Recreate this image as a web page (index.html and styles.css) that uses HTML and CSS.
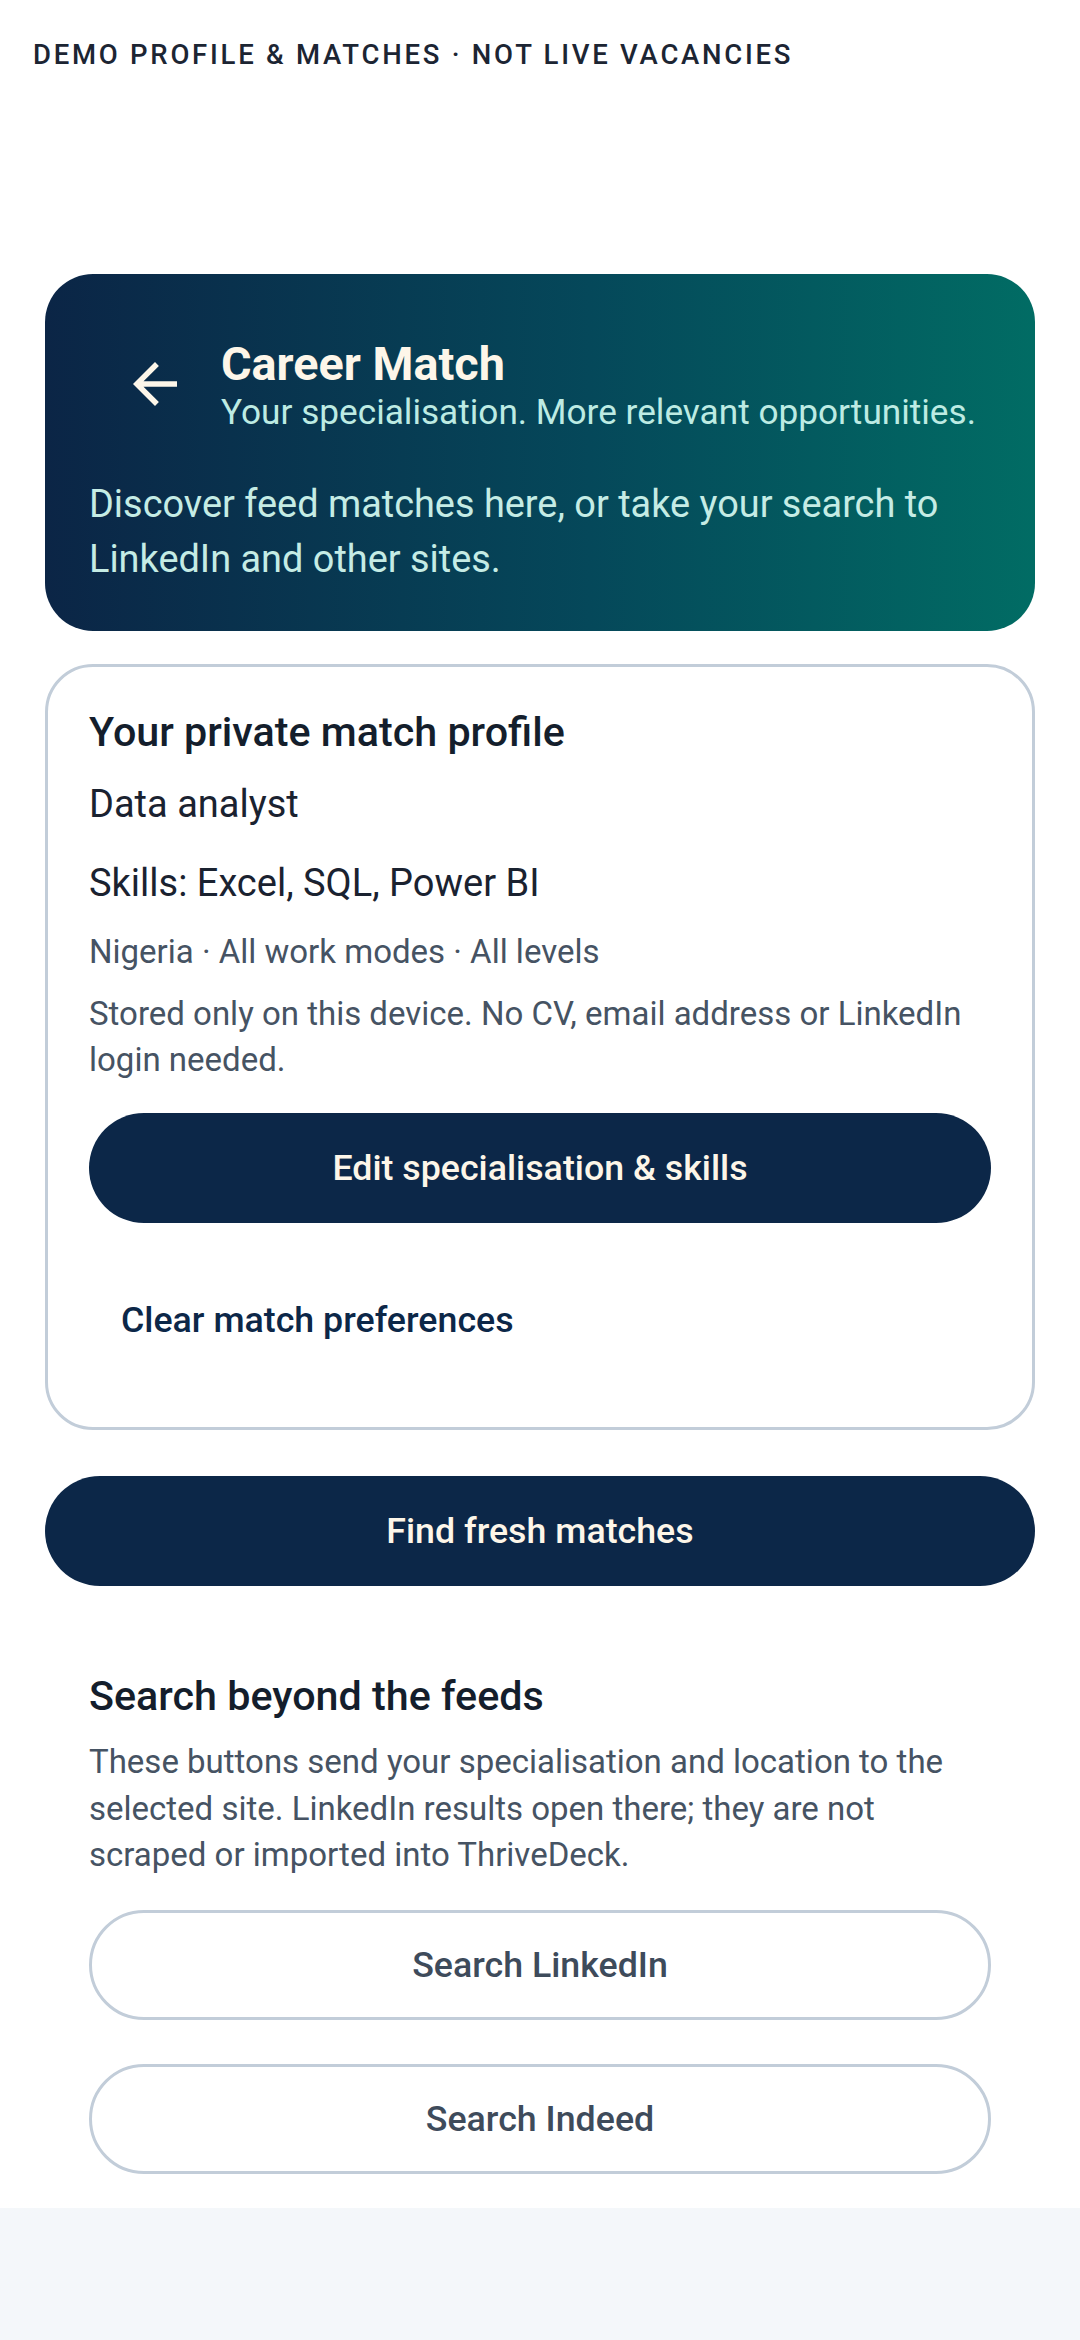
FILE: index.html
```html
<!DOCTYPE html>
<html lang="en">
<head>
    <meta charset="UTF-8">
    <meta name="viewport" content="width=device-width, initial-scale=1.0">
    <title>Career Match | ThriveDeck</title>
    <link rel="stylesheet" href="styles.css">
</head>
<body>
    <main class="screen">
        <p class="demo-note">Demo profile &amp; matches · Not live vacancies</p>

        <section class="hero">
            <div class="hero-head">
                <button class="back-btn" aria-label="Back">
                    <svg viewBox="0 0 24 24" width="66" height="66">
                        <path d="M20 11H7.83l5.59-5.59L12 4l-8 8 8 8 1.41-1.41L7.83 13H20v-2z"/>
                    </svg>
                </button>
                <div class="hero-titles">
                    <h1>Career Match</h1>
                    <p class="hero-sub">Your specialisation. More relevant opportunities.</p>
                </div>
            </div>
            <p class="hero-text">Discover feed matches here, or take your search to LinkedIn and other sites.</p>
        </section>

        <section class="card profile">
            <h2>Your private match profile</h2>
            <p class="role">Data analyst</p>
            <p class="skills">Skills: Excel, SQL, Power BI</p>
            <p class="meta">Nigeria · All work modes · All levels</p>
            <p class="note">Stored only on this device. No CV, email address or LinkedIn login needed.</p>
            <button class="btn btn-primary edit-btn">Edit specialisation &amp; skills</button>
            <button class="btn btn-text">Clear match preferences</button>
        </section>

        <button class="btn btn-primary find-btn">Find fresh matches</button>

        <section class="card search">
            <h2>Search beyond the feeds</h2>
            <p class="note search-note">These buttons send your specialisation and location to the selected site. LinkedIn results open there; they are not scraped or imported into ThriveDeck.</p>
            <button class="btn btn-outline first">Search LinkedIn</button>
            <button class="btn btn-outline">Search Indeed</button>
        </section>
    </main>
</body>
</html>
```

FILE: styles.css
```css
html {
    background-color: #f4f7fa;
}

body {
    margin: 0;
    font-family: Roboto, 'Noto Sans', sans-serif;
    color: #141e2c;
    background-color: #f4f7fa;
}

.screen {
    background: #fff;
    padding: 0 45px;
}

p,
h1,
h2 {
    margin: 0;
}

.demo-note {
    padding-top: 37px;
    margin-left: -12px;
    font-size: 27.5px;
    line-height: 35.75px;
    font-weight: 500;
    letter-spacing: 0.1em;
    text-transform: uppercase;
    color: #1c2533;
}

/* header card */
.hero {
    margin-top: 201px;
    padding: 44px;
    border-radius: 48px;
    background: linear-gradient(90deg, #0b2546 0%, #05485a 55%, #016c64 100%);
}

.hero-head {
    display: flex;
    align-items: center;
}

.back-btn {
    width: 132px;
    height: 132px;
    padding: 0;
    border: none;
    background: none;
    display: flex;
    align-items: center;
    justify-content: center;
    flex-shrink: 0;
}

.back-btn svg {
    fill: #fdf6e9;
}

.hero-titles h1 {
    font-size: 46.75px;
    line-height: 56px;
    font-weight: 700;
    color: #fdf6e9;
}

.hero-sub {
    font-size: 35.2px;
    line-height: 40px;
    color: #bdebe3;
}

.hero-text {
    margin-top: 27px;
    font-size: 37.9px;
    line-height: 55px;
    color: #c5ece5;
}

/* cards */
.card {
    margin-top: 33px;
    padding: 41px;
    border: 3px solid #c2cdd9;
    border-radius: 48px;
    display: flex;
    flex-direction: column;
}

.card h2 {
    font-size: 41.25px;
    line-height: 49.5px;
    font-weight: 500;
    color: #141e2c;
}

.role,
.skills {
    font-size: 38px;
    line-height: 54px;
    color: #1a2230;
}

.role {
    margin-top: 20px;
}

.skills {
    margin-top: 25px;
}

.meta,
.note {
    font-size: 33px;
    line-height: 46.5px;
    color: #465363;
}

.meta {
    margin-top: 19px;
}

.note {
    margin-top: 15px;
}

/* buttons */
.btn {
    font-family: inherit;
    font-size: 35.75px;
    font-weight: 500;
    border-radius: 999px;
    cursor: pointer;
}

.btn-primary {
    height: 110px;
    border: none;
    background: #0c2748;
    color: #fdf6e9;
}

.edit-btn {
    margin-top: 29px;
}

.btn-text {
    align-self: flex-start;
    height: 132px;
    margin-top: 31px;
    padding: 0 32px;
    border: none;
    background: none;
    color: #0c2748;
}

.find-btn {
    display: block;
    width: 100%;
    margin-top: 46px;
}

.search {
    margin-top: 42px;
    padding-bottom: 31px;
    border-color: transparent;
}

.search-note {
    margin-top: 18px;
}

.btn-outline {
    height: 110px;
    margin-top: 44px;
    border: 3px solid #c2cdd9;
    background: #fff;
    color: #3e4b5b;
}

.btn-outline.first {
    margin-top: 31px;
}
```
